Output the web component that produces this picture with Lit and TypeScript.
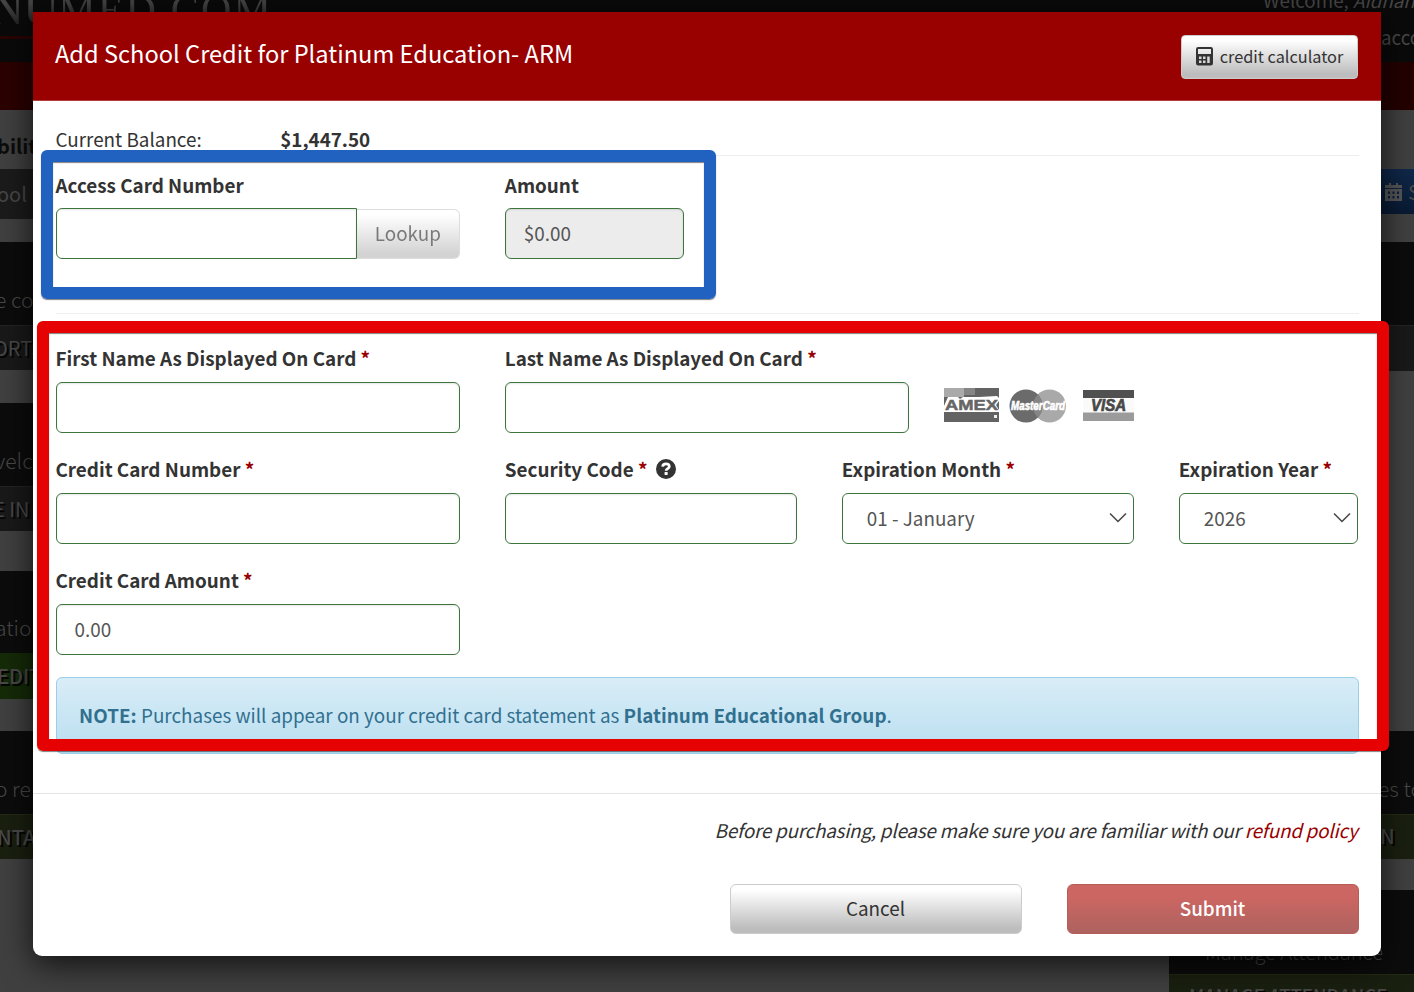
import {LitElement, html, css} from 'lit'
import {customElement, property} from 'lit/decorators.js'

const fontStack = css`"Noto Sans CJK SC", "Noto Sans", sans-serif`

@customElement('form-field')
export class FormField extends LitElement{
    static styles = css`
        :host{
            display: block;
            height: 111px;
        }

        .label{
            display: flex;
            align-items: center;
            height: 32px;
            margin-top: -10px;
            white-space: pre;
            font-weight: 700;
        }

        .required{
            color: #990000;
        }

        .label svg{
            width: 20px;
            height: 20px;
            margin: 0 0 0 8.500px;
        }

        .row{
            display: flex;
            margin-top: 8px;
        }

        :host([compact]) .label{
            margin-top: -9px;
        }

        :host([compact]) .row{
            margin-top: 7px;
        }

        .control{
            flex: 1;
            box-sizing: border-box;
            display: flex;
            align-items: center;
            justify-content: space-between;
            height: 51px;
            padding: 0 6px 2px 18px;
            border: 1px solid #3c763d;
            border-radius: 6px;
            background: #fff;
            box-shadow: inset 0 1px 2px rgba(0,0,0,.1);
            color: #555;
        }

        .control.disabled{
            background: #ececec;
        }

        .control.select{
            padding-left: 24px;
            box-shadow: none;
        }

        .control.joined{
            border-radius: 6px 0 0 6px;
        }

        .control svg{
            width: 18px;
            height: 12px;
        }
    `

    @property() label = ''
    @property() value = ''
    @property() kind = 'input'
    @property({type: Boolean}) required = false
    @property({type: Boolean}) help = false

    protected render(): unknown {
        return html`
            <div class="label">${this.label}${this.required ? html`<span class="required"> *</span>` : ''}${this.help ? this._helpIcon() : ''}</div>
            <div class="row">
                <div class="control ${this.kind}">
                    <span>${this.value}</span>
                    ${this.kind === 'select' ? html`
                        <svg viewBox="0 0 18 12"><path d="M1 1.5l8 8 8-8" fill="none" stroke="#444" stroke-width="1.5"/></svg>` : ''}
                </div>
                <slot></slot>
            </div>`
    }

    _helpIcon = () => html`
        <svg viewBox="0 0 20 20">
            <circle cx="10" cy="10" r="10" fill="#333"/>
            <path d="M6.600 7.700C6.800 5.600 8.200 4.800 10 4.800c2 0 3.300 1 3.300 2.600 0 2.300-3.200 2-3.200 4.300" fill="none" stroke="#fff" stroke-width="2.700"/>
            <rect x="8.600" y="13" width="3" height="3" fill="#fff"/>
        </svg>`
}

@customElement('card-logos')
export class CardLogos extends LitElement{
    static styles = css`
        :host{
            display: flex;
            align-items: center;
            height: 34px;
        }

        .amex{
            width: 55px;
            height: 34px;
        }

        .mastercard{
            width: 58px;
            height: 34px;
            margin: 1px 16px 0 10px;
        }

        .visa{
            width: 51px;
            height: 31px;
        }

        text{
            font-family: "Liberation Sans", sans-serif;
            font-weight: 700;
        }
    `

    protected render(): unknown {
        return html`
            <svg class="amex" viewBox="0 0 55 34">
                <rect width="55" height="34" fill="#636363"/>
                <rect width="20" height="9" fill="#aaa"/>
                <rect x="20" width="11" height="7" fill="#858585"/>
                <path d="M0 24V18L4 9h10l2 2 3-2h16l18-1 2 2v3l-3 4 3 5v2z" fill="#fff"/>
                <text x="1" y="21.500" font-size="15.500" textLength="53" lengthAdjust="spacingAndGlyphs" fill="#666" stroke="#666" stroke-width=".5">AMEX</text>
                <rect x="50" y="27" width="3" height="3" fill="#eee"/>
            </svg>
            <svg class="mastercard" viewBox="0 0 58 34">
                <circle cx="40.500" cy="17" r="16.500" fill="#a9a9a9"/>
                <circle cx="17" cy="17" r="16.500" fill="#6b6b6b"/>
                <path d="M28.700 5.500a16.500 16.500 0 0 1 0 23 16.500 16.500 0 0 1 0-23z" fill="#858585"/>
                <text x="2" y="21" font-size="12" font-style="italic" textLength="54" lengthAdjust="spacingAndGlyphs" fill="#fff" stroke="#fff" stroke-width=".6">MasterCard</text>
            </svg>
            <svg class="visa" viewBox="0 0 51 31">
                <rect width="51" height="31" fill="#fafafa"/>
                <rect width="51" height="8" fill="#505050"/>
                <rect y="22.500" width="51" height="8.500" fill="#9b9b9b"/>
                <text x="8" y="20.800" font-size="16" font-style="italic" textLength="35" lengthAdjust="spacingAndGlyphs" fill="#484848" stroke="#484848" stroke-width=".7">VISA</text>
            </svg>`
    }
}

@customElement('page-backdrop')
export class PageBackdrop extends LitElement{
    static styles = css`
        :host{
            display: block;
            height: 992px;
            overflow: hidden;
            background: #404040;
            color: #484848;
            font-size: 20px;
        }

        .masthead{
            display: flex;
            justify-content: space-between;
            box-sizing: border-box;
            height: 62px;
            background: #0a0a0a;
        }

        .brand{
            width: 300px;
            height: 36px;
            border-bottom: 3px solid #290404;
        }

        .logo{
            margin: -18px 0 0 -12px;
            font: 50px/50px "Liberation Serif", serif;
            letter-spacing: -1px;
            background: linear-gradient(#444 40%, #202020 85%);
            -webkit-background-clip: text;
            color: transparent;
        }

        .logo small{
            font-size: 42px;
            letter-spacing: 2.200px;
        }

        .account{
            width: 151px;
            white-space: nowrap;
            font-size: 18.800px;
            line-height: 36px;
        }

        .account div:first-child{
            margin-top: -18px;
        }

        .account div:last-child{
            margin-top: 1px;
            padding-left: 118px;
        }

        .navbar{
            height: 48px;
            background: linear-gradient(90deg, #2b0200, #240100);
        }

        .columns{
            display: flex;
            justify-content: space-between;
        }

        .left{
            width: 600px;
        }

        .right{
            width: 245px;
        }

        .block{
            display: flex;
            align-items: center;
            box-sizing: border-box;
            white-space: nowrap;
            overflow: hidden;
        }

        .left .block{ text-indent: -3px; padding-bottom: 1px; }
        .gap{ background: #404040; }
        .left .heading{ color: #0c0c0c; font-weight: 700; padding: 13px 0 0; }
        .left .dark, .dark{ background: #0c0c0c; align-items: flex-end; padding-bottom: 11px; font-weight: 300; font-size: 21px; text-indent: -5px; }
        .field{ background: #1b1b1b; }
        .button{ background: #191919; border-top: 1px solid #242424; text-shadow: 2px 2px #050505; }
        .left .button{ text-indent: -7px; }
        .green{ background: #152b08; text-shadow: 2px 2px #050505; font-weight: 500; }
        .olive{ background: #1a2010; border-top: 1px solid #242c14; text-shadow: 2px 2px #050505; font-weight: 500; }
        .blue{ background: linear-gradient(#10284a, #091a33); padding-left: 216px; }

        .blue svg{
            width: 17px;
            height: 18px;
            margin-right: 6px;
            flex: none;
        }

        .r0{ padding-left: 214px; }
        .r1{ padding: 0 0 2px 211px; }
        .r2{ padding: 0 0 0 20px; font-size: 18.500px; }
        .dark.tail{ padding: 0 0 7px 41px; font-size: 20px; }

        .h23{ height: 23px; }
        .h28{ height: 28px; }
        .h31{ height: 31px; }
        .h32{ height: 32px; }
        .h33{ height: 33px; }
        .h40{ height: 40px; }
        .h45{ height: 45px; }
        .h46{ height: 46px; }
        .h50{ height: 50px; }
        .h59{ height: 59px; }
        .h82{ height: 82px; }
        .h83{ height: 83px; }
        .h84{ height: 84px; }
        .h360{ height: 360px; }
    `

    protected render(): unknown {
        return html`
            <div class="masthead">
                <div class="brand"><div class="logo">NU<small>MED.COM</small></div></div>
                <div class="account">
                    <div>Welcome, <i>Aidnan</i></div>
                    <div>account</div>
                </div>
            </div>
            <div class="navbar"></div>
            <div class="columns">
                <div class="left">
                    <div class="block gap heading h59">bility</div>
                    <div class="block field h50">ool</div>
                    <div class="block gap h23"></div>
                    <div class="block dark h83">e co</div>
                    <div class="block button h45">ORTS</div>
                    <div class="block gap h33"></div>
                    <div class="block dark h83">velco</div>
                    <div class="block button h45">E IN</div>
                    <div class="block gap h40"></div>
                    <div class="block dark h82">ation</div>
                    <div class="block green h46">EDIT</div>
                    <div class="block gap h32"></div>
                    <div class="block dark h83">o re</div>
                    <div class="block olive h45">NTA</div>
                </div>
                <div class="right">
                    <div class="block gap h59"></div>
                    <div class="block blue h45">
                        <svg viewBox="0 0 17 18">
                            <path d="M4 0h2v2h5V0h2v2h4v3H0V2h4zM0 6h17v12H0z" fill="#565656"/>
                            <path d="M3 8.500h2V11H3zM7.500 8.500h2V11h-2zM12 8.500h2V11h-2zM3 13h2v2.500H3zM7.500 13h2v2.500h-2zM12 13h2v2.500h-2z" fill="#0c2040"/>
                        </svg>
                        S
                    </div>
                    <div class="block gap h28"></div>
                    <div class="block dark h83"></div>
                    <div class="block button h46"></div>
                    <div class="block gap h360"></div>
                    <div class="block dark r0 h83">es to</div>
                    <div class="block olive r1 h45">N</div>
                    <div class="block gap h31"></div>
                    <div class="block dark tail h84">Manage Attendance</div>
                    <div class="block olive r2 h40">MANAGE ATTENDANCE</div>
                </div>
            </div>`
    }
}

@customElement('app-root')
export class AppRoot extends LitElement{
    static styles = css`
        :host{
            display: block;
            position: relative;
            width: 1414px;
            height: 992px;
            overflow: hidden;
            font-family: ${fontStack};
            font-size: 18.850px;
            line-height: 30px;
            color: #333;
        }

        .modal{
            position: absolute;
            left: 33px;
            top: 12px;
            box-sizing: border-box;
            width: 1348px;
            height: 944px;
            background: #fff;
            border-radius: 0 0 9px 9px;
            box-shadow: 0 8px 32px rgba(0,0,0,.75);
        }

        .modal-header{
            display: flex;
            justify-content: space-between;
            box-sizing: border-box;
            height: 89px;
            padding: 23px 23px 0 22px;
            background: #990000;
            border-bottom: 1px solid #b33c3c;
            color: #fff;
        }

        .title{
            margin-top: -1px;
            font-size: 23.630px;
            line-height: 38px;
            white-space: nowrap;
        }

        .btn{
            box-sizing: border-box;
            display: flex;
            align-items: center;
            justify-content: center;
            height: 50px;
            padding-bottom: 2px;
            border: 1px solid #ccc;
            border-radius: 6px;
            background: linear-gradient(#fff 10%, #bdbdbd 90%);
            color: #333;
        }

        .btn.small{
            width: 177px;
            height: 44px;
            border-radius: 4px;
            font-size: 16.300px;
        }

        .btn.small svg{
            width: 17px;
            height: 19px;
            margin-right: 7px;
        }

        .btn.lookup{
            width: 103px;
            margin-top: 1px;
            border-left: 0;
            border-radius: 0 6px 6px 0;
            opacity: .65;
        }

        .btn.submit{
            border-color: #b85c58;
            background: linear-gradient(#cc6662 25%, #ad625f);
            color: #fff;
            font-weight: 500;
        }

        .modal-body{
            box-sizing: border-box;
            height: 692px;
            padding: 23px 22.500px 0;
        }

        .grid{
            display: grid;
            grid-template-columns: repeat(12, minmax(0, 1fr));
            column-gap: 45px;
        }

        .balance{
            height: 31px;
            border-bottom: 1px solid #eee;
        }

        .balance span{
            grid-column: span 2;
            white-space: nowrap;
        }

        .access{
            height: 135px;
            padding-top: 22px;
            border-bottom: 1px solid #eee;
        }

        .payment{
            padding-top: 38px;
        }

        .s2{ grid-column: span 2; margin-right: .500px; }
        .s3{ grid-column: span 3; }
        .s4{ grid-column: span 4; }
        .start{ grid-column: 1 / span 4; }

        .logos{
            margin: 36px 0 0 -10px;
        }

        .note{
            box-sizing: border-box;
            height: 77px;
            margin-top: -8px;
            padding: 22px 22.500px;
            border: 1px solid #9acfea;
            border-radius: 6px;
            background: linear-gradient(#d9edf7, #b9def0);
            color: #31708f;
        }

        .note b{
            letter-spacing: .050px;
        }

        .modal-footer{
            border-top: 1px solid #e5e5e5;
            padding: 21px 22.500px;
        }

        .policy{
            height: 30px;
            padding-right: 1px;
            text-align: right;
            font-style: italic;
            letter-spacing: -.220px;
            white-space: nowrap;
        }

        .policy a{
            color: #990000;
        }

        .actions{
            display: flex;
            justify-content: flex-end;
            gap: 45px;
            margin-top: 39px;
        }

        .actions .btn{
            width: 292px;
        }

        .mark{
            position: absolute;
            box-sizing: border-box;
            border: 12px solid;
            border-radius: 6px;
            box-shadow: 0 1px 1px rgba(0,0,0,.5), inset 0 1px 1px rgba(0,0,0,.5);
        }

        .mark.blue{
            left: 41px;
            top: 150px;
            width: 675px;
            height: 149px;
            border-color: #2161bf;
        }

        .mark.red{
            left: 37px;
            top: 321px;
            width: 1352px;
            height: 430px;
            border-color: #e60202;
        }
    `

    protected render(): unknown {
        return html`
            <page-backdrop></page-backdrop>
            <div class="modal">
                <div class="modal-header">
                    <div class="title">Add School Credit for Platinum Education- ARM</div>
                    <div class="btn small">${this._calculator()}<span>credit calculator</span></div>
                </div>
                <div class="modal-body">
                    <div class="grid balance"><span>Current Balance:</span><span><b>$1,447.50</b></span></div>
                    <div class="grid access">
                        <form-field class="s4" label="Access Card Number" kind="joined" compact><div class="btn lookup">Lookup</div></form-field>
                        <form-field class="s2" label="Amount" value="$0.00" kind="disabled" compact></form-field>
                    </div>
                    <div class="grid payment">
                        <form-field class="s4" label="First Name As Displayed On Card" required></form-field>
                        <form-field class="s4" label="Last Name As Displayed On Card" required></form-field>
                        <card-logos class="s4 logos"></card-logos>
                        <form-field class="s4" label="Credit Card Number" required></form-field>
                        <form-field class="s3" label="Security Code" required help></form-field>
                        <form-field class="s3" label="Expiration Month" value="01 - January" kind="select" required></form-field>
                        <form-field class="s2" label="Expiration Year" value="2026" kind="select" required></form-field>
                        <form-field class="start" label="Credit Card Amount" value="0.00" required></form-field>
                    </div>
                    <div class="note"><b>NOTE:</b> Purchases will appear on your credit card statement as <b>Platinum Educational Group</b>.</div>
                </div>
                <div class="modal-footer">
                    <div class="policy">Before purchasing, please make sure you are familiar with our <a>refund policy</a></div>
                    <div class="actions">
                        <div class="btn">Cancel</div>
                        <div class="btn submit">Submit</div>
                    </div>
                </div>
            </div>
            <div class="mark blue"></div>
            <div class="mark red"></div>`
    }

    _calculator = () => html`
        <svg viewBox="0 0 17 19">
            <rect x="1" y="1" width="15" height="16.500" rx="1.200" fill="none" stroke="#333" stroke-width="2"/>
            <path d="M1 7h15v10H1z" fill="#333"/>
            <path d="M3 9.500h2.500V12H3zM7 9.500h2.500V12H7zM11.200 9.500h2.500V12h-2.500zM3 13.500h2.500V16H3zM7 13.500h2.500V16H7zM11.200 12h2.500v4h-2.500z" fill="#d8d8d8"/>
        </svg>`
}

declare global {
    interface HTMLElementTagNameMap {
      "app-root": AppRoot;
      "form-field": FormField;
      "card-logos": CardLogos;
      "page-backdrop": PageBackdrop;
    }
}
